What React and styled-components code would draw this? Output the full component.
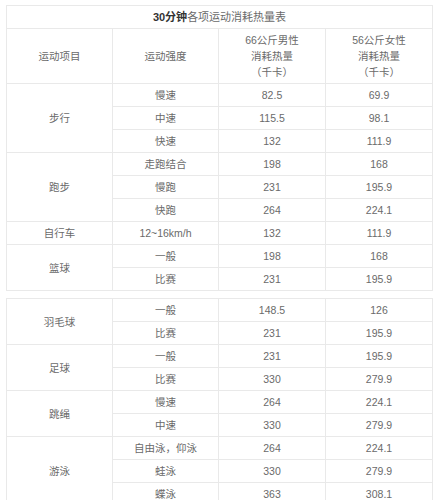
import React from 'react'
import styled, { createGlobalStyle } from 'styled-components'

const GlobalStyle = createGlobalStyle`
    html, body {
        margin: 0;
        padding: 0;
        background: #ffffff;
    }
    body {
        font-family: "Liberation Sans", "Noto Sans CJK SC", sans-serif;
    }
`

const Page = styled.div`
    width: 442px;
    height: 500px;
    overflow: hidden;
    padding: 5px 0 0 6px;
    box-sizing: border-box;
`

const Table = styled.table`
    width: 427px;
    border-collapse: collapse;
    table-layout: fixed;
    margin-bottom: 7px;
    color: #6a6a6a;
    font-size: 10.5px;
    td {
        border: 1px solid #e9e9e9;
        text-align: center;
        vertical-align: middle;
        padding: 0;
        line-height: 16px;
    }
`

const Col = styled.col`
    width: ${(p) => p.$w}px;
`

const Row = styled.tr`
    height: ${(p) => p.$h || 23}px;
`

const Title = styled.td`
    font-size: 11px;
    b {
        color: #333;
        font-weight: bold;
    }
`

const first = [
    { name: '步行', items: [['慢速', '82.5', '69.9'], ['中速', '115.5', '98.1'], ['快速', '132', '111.9']] },
    { name: '跑步', items: [['走跑结合', '198', '168'], ['慢跑', '231', '195.9'], ['快跑', '264', '224.1']] },
    { name: '自行车', items: [['12~16km/h', '132', '111.9']] },
    { name: '篮球', items: [['一般', '198', '168'], ['比赛', '231', '195.9']] },
]

const second = [
    { name: '羽毛球', items: [['一般', '148.5', '126'], ['比赛', '231', '195.9']] },
    { name: '足球', items: [['一般', '231', '195.9'], ['比赛', '330', '279.9']] },
    { name: '跳绳', items: [['慢速', '264', '224.1'], ['中速', '330', '279.9']] },
    { name: '游泳', items: [['自由泳，仰泳', '264', '224.1'], ['蛙泳', '330', '279.9'], ['蝶泳', '363', '308.1']] },
]

function Groups({ data }) {
    return data.map((g) =>
        g.items.map((it, i) => (
            <Row key={g.name + i}>
                {i === 0 && <td rowSpan={g.items.length}>{g.name}</td>}
                <td>{it[0]}</td>
                <td>{it[1]}</td>
                <td>{it[2]}</td>
            </Row>
        ))
    )
}

function Cols() {
    return (
        <colgroup>
            <Col $w={106} />
            <Col $w={106} />
            <Col $w={107} />
            <Col $w={107} />
        </colgroup>
    )
}

export default function App() {
    return (
        <Page>
            <GlobalStyle />
            <Table>
                <Cols />
                <tbody>
                    <Row>
                        <Title colSpan={4}>
                            <b>30分钟</b>各项运动消耗热量表
                        </Title>
                    </Row>
                    <Row $h={55}>
                        <td>运动项目</td>
                        <td>运动强度</td>
                        <td>
                            66公斤男性
                            <br />
                            消耗热量
                            <br />
                            （千卡）
                        </td>
                        <td>
                            56公斤女性
                            <br />
                            消耗热量
                            <br />
                            （千卡）
                        </td>
                    </Row>
                    <Groups data={first} />
                </tbody>
            </Table>
            <Table>
                <Cols />
                <tbody>
                    <Groups data={second} />
                </tbody>
            </Table>
        </Page>
    )
}
